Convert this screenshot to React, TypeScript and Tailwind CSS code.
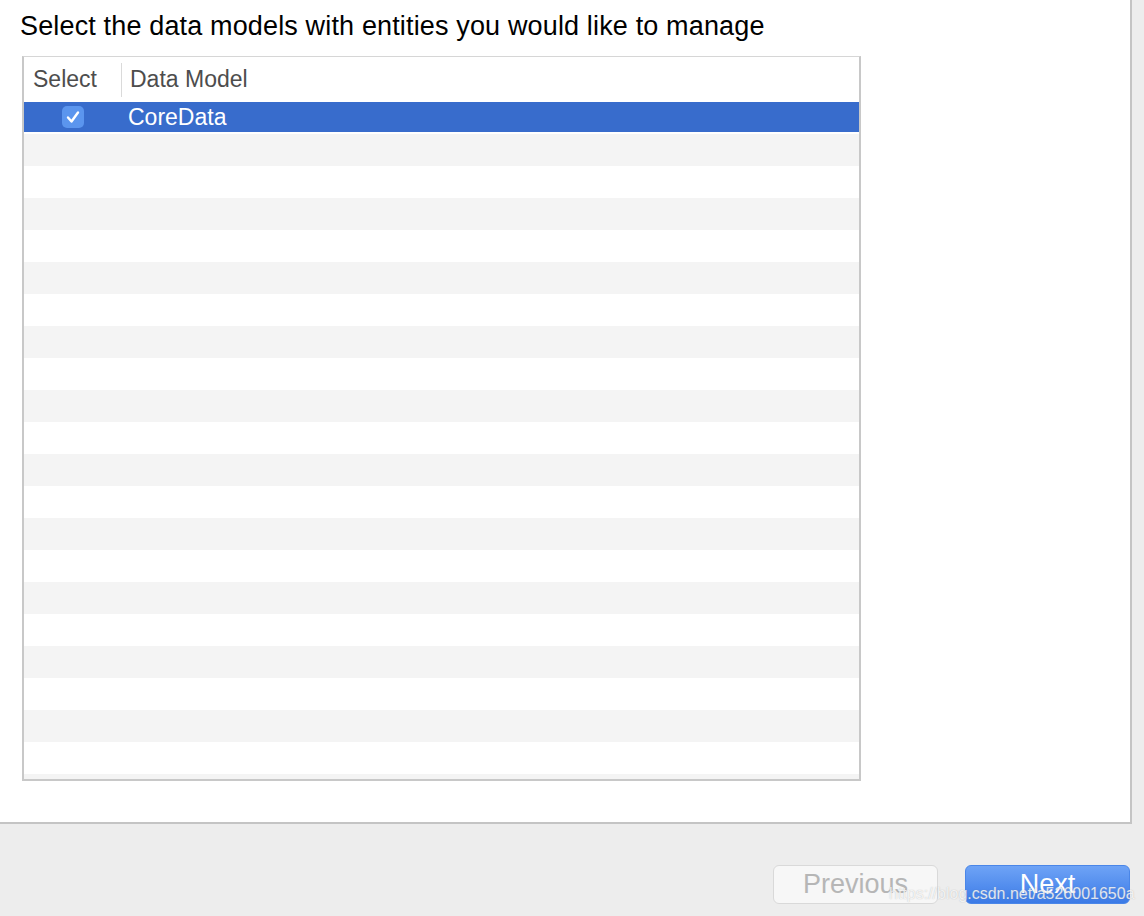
import React from "react";

export default function App() {
  const rows = Array.from({ length: 21 }, (_, i) => i);
  return (
    <div
      className="w-[1144px] h-[916px] bg-[#ededed] flex flex-col overflow-hidden relative"
      style={{ fontFamily: '"Liberation Sans", Arial, sans-serif' }}
    >
      <div className="w-[1132px] h-[824px] bg-white border-r-2 border-b-2 border-[#c4c4c4] flex flex-col shrink-0">
        <div className="pl-[20px] pt-[10px] h-[56px] text-[27px] tracking-[0.15px] text-black leading-[32px]">
          Select the data models with entities you would like to manage
        </div>
        <div className="ml-[22px] w-[839px] h-[725px] border-2 border-t border-[#c8c8c8] border-t-[#d6d6d6] flex flex-col overflow-hidden">
          <div className="h-[45px] shrink-0 flex items-center text-[23px] text-[#4d4d4d]">
            <div className="w-[98px] pl-[9px] h-[34px] flex items-center border-r border-[#dadada]">Select</div>
            <div className="pl-[8px]">Data Model</div>
          </div>
          <div className="h-[32px] shrink-0 flex flex-col">
            <div className="h-[30px] bg-[#386ccc] flex items-center text-white text-[23px]">
              <div className="w-[98px] flex justify-center">
                <div className="w-[22px] h-[22px] rounded-[5px] bg-[#5b95ee] flex items-center justify-center">
                  <svg width="16" height="16" viewBox="0 0 16 16">
                    <path d="M3 8.5 L6.5 12.5 L13 3.5" fill="none" stroke="white" strokeWidth="2.4" strokeLinecap="round" strokeLinejoin="round" />
                  </svg>
                </div>
              </div>
              <div className="pl-[6px]">CoreData</div>
            </div>
          </div>
          {rows.map((i) => (
            <div
              key={i}
              className={i % 2 === 0 ? "h-[32px] shrink-0 bg-[#f4f4f4]" : "h-[32px] shrink-0 bg-white"}
            />
          ))}
        </div>
      </div>
      <div className="flex justify-end gap-[27px] pr-[14px] pt-[41px]">
        <div className="w-[165px] h-[39px] rounded-[6px] bg-[#f7f7f7] border border-[#d9d9d9] flex items-center justify-center text-[27px] text-[#b6b6b6]">
          Previous
        </div>
        <div className="w-[165px] h-[39px] rounded-[6px] bg-gradient-to-b from-[#6ea3f6] to-[#3b7ae6] border border-[#4a86e8] flex items-center justify-center text-[27px] text-white">
          Next
        </div>
      </div>
      <div className="absolute left-[889px] top-[884px] text-[16px] text-white/80 leading-[20px] [text-shadow:0_0_1px_rgba(120,120,120,0.5)]">
        https://blog.csdn.net/a526001650a
      </div>
    </div>
  );
}
